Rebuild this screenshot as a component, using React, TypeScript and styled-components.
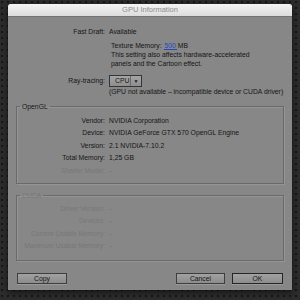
import React from "react";
import styled, { createGlobalStyle } from "styled-components";

const Global = createGlobalStyle`
  html, body {
    margin: 0;
    padding: 0;
    width: 300px;
    height: 300px;
    overflow: hidden;
    background-color: #2c2c2c;
    background-image: radial-gradient(circle at 2px 2px, #161616 0.9px, transparent 1.3px);
    background-size: 6px 6px;
    font-family: "Liberation Sans", Arial, sans-serif;
  }
`;

const Page = styled.div`
  padding: 4px 8px 0 8px;
`;

const Dialog = styled.div`
  width: 284px;
  height: 286px;
  background: #878787;
  display: flex;
  flex-direction: column;
  box-shadow: 0 2px 6px rgba(0, 0, 0, 0.6);
  border-radius: 3px 3px 0 0;
  overflow: hidden;
`;

const TitleBar = styled.div`
  height: 12px;
  flex: none;
  background: linear-gradient(#f4f4f4, #dcdcdc);
  border-bottom: 1px solid #737373;
  color: #8c8c8c;
  font-size: 7.5px;
  line-height: 12px;
  text-align: center;
`;

const Body = styled.div`
  flex: 1;
  padding: 0 8px 8px 8px;
  display: flex;
  flex-direction: column;
  font-size: 6.8px;
  color: #151515;
`;

const Row = styled.div<{ $labelWidth: number; $h?: number; $dim?: boolean }>`
  display: grid;
  grid-template-columns: ${(p) => p.$labelWidth}px 1fr;
  column-gap: 4px;
  align-items: center;
  height: ${(p) => p.$h ?? 12.5}px;
  line-height: 10px;
  color: ${(p) => (p.$dim ? "#777777" : "#151515")};
  white-space: nowrap;
`;

const Label = styled.span`
  text-align: right;
`;

const Value = styled.span``;

const Indented = styled.div<{ $mt: number }>`
  margin-left: 95px;
  margin-top: ${(p) => p.$mt}px;
  line-height: 8.5px;
  white-space: nowrap;
`;

const Line = styled.div<{ $h?: number }>`
  height: ${(p) => p.$h ?? 8.5}px;
  line-height: ${(p) => p.$h ?? 8.5}px;
`;

const HotText = styled.span`
  color: #2448c0;
  border-bottom: 1px solid #2448c0;
  padding: 0 1px;
  margin-right: 1px;
`;

const Select = styled.div`
  width: 33px;
  height: 12px;
  box-sizing: border-box;
  border: 1px solid #353535;
  background: linear-gradient(#a4a4a4, #8e8e8e);
  display: flex;
  align-items: center;
  font-size: 6.8px;
  line-height: 10px;
`;

const SelectText = styled.span`
  flex: 1;
  padding-left: 5px;
  border-right: 1px solid #6a6a6a;
`;

const SelectArrow = styled.span`
  width: 10px;
  text-align: center;
  font-size: 5px;
`;

const Group = styled.fieldset<{ $mt: number; $pt: number; $pb: number }>`
  margin: ${(p) => p.$mt}px 0 0 0;
  padding: ${(p) => p.$pt}px 0 ${(p) => p.$pb}px 0;
  border: 1px solid #6a6a6a;
  box-shadow: inset 1px 1px 0 #959595, 1px 1px 0 #959595;
  min-width: 0;
`;

const Legend = styled.legend<{ $dim?: boolean }>`
  margin-left: 3px;
  padding: 0 2px;
  font-size: 6.8px;
  line-height: 10px;
  color: ${(p) => (p.$dim ? "#777777" : "#151515")};
`;

const ButtonBar = styled.div`
  margin-top: 12px;
  display: flex;
  align-items: center;
  padding: 0 1px;
`;

const Spacer = styled.div`
  flex: 1;
`;

const Button = styled.button<{ $w: number; $default?: boolean }>`
  width: ${(p) => p.$w}px;
  height: 11px;
  margin: 0 0 0 ${(p) => (p.$default ? 7 : 0)}px;
  padding: 0;
  box-sizing: border-box;
  border: 1px solid ${(p) => (p.$default ? "#262626" : "#3e3e3e")};
  background: linear-gradient(#a2a2a2, #8c8c8c);
  font-family: "Liberation Sans", Arial, sans-serif;
  font-size: 6.8px;
  line-height: 9px;
  color: #151515;
  box-shadow: 0 1px 0 #9a9a9a;
`;

export default function App() {
  return (
    <>
      <Global />
      <Page>
        <Dialog>
          <TitleBar>GPU Information</TitleBar>
          <Body>
            <Row $labelWidth={89} $h={10} style={{ marginTop: 10 }}>
              <Label>Fast Draft:</Label>
              <Value>Available</Value>
            </Row>
            <Indented $mt={4}>
              <Line $h={10}>
                Texture Memory: <HotText>500</HotText>MB
              </Line>
              <Line>This setting also affects hardware-accelerated</Line>
              <Line>panels and the Cartoon effect.</Line>
            </Indented>
            <Row $labelWidth={89} $h={12} style={{ marginTop: 6.5 }}>
              <Label>Ray-tracing:</Label>
              <Select>
                <SelectText>CPU</SelectText>
                <SelectArrow>▼</SelectArrow>
              </Select>
            </Row>
            <Row $labelWidth={89} $h={10}>
              <Label />
              <Value>(GPU not available – incompatible device or CUDA driver)</Value>
            </Row>
            <Group $mt={5} $pt={2.75} $pb={6}>
              <Legend>OpenGL</Legend>
              <Row $labelWidth={88}>
                <Label>Vendor:</Label>
                <Value>NVIDIA Corporation</Value>
              </Row>
              <Row $labelWidth={88}>
                <Label>Device:</Label>
                <Value>NVIDIA GeForce GTX 570 OpenGL Engine</Value>
              </Row>
              <Row $labelWidth={88}>
                <Label>Version:</Label>
                <Value>2.1 NVIDIA-7.10.2</Value>
              </Row>
              <Row $labelWidth={88}>
                <Label>Total Memory:</Label>
                <Value>1,25 GB</Value>
              </Row>
              <Row $labelWidth={88} $dim>
                <Label>Shader Model:</Label>
                <Value>–</Value>
              </Row>
            </Group>
            <Group $mt={7} $pt={1.75} $pb={7}>
              <Legend $dim>CUDA</Legend>
              <Row $labelWidth={88} $dim>
                <Label>Driver Version:</Label>
                <Value>–</Value>
              </Row>
              <Row $labelWidth={88} $dim>
                <Label>Devices:</Label>
                <Value>–</Value>
              </Row>
              <Row $labelWidth={88} $dim>
                <Label>Current Usable Memory:</Label>
                <Value>–</Value>
              </Row>
              <Row $labelWidth={88} $dim>
                <Label>Maximum Usable Memory:</Label>
                <Value>–</Value>
              </Row>
            </Group>
            <ButtonBar>
              <Button $w={50}>Copy</Button>
              <Spacer />
              <Button $w={49}>Cancel</Button>
              <Button $w={51} $default>
                OK
              </Button>
            </ButtonBar>
          </Body>
        </Dialog>
      </Page>
    </>
  );
}
